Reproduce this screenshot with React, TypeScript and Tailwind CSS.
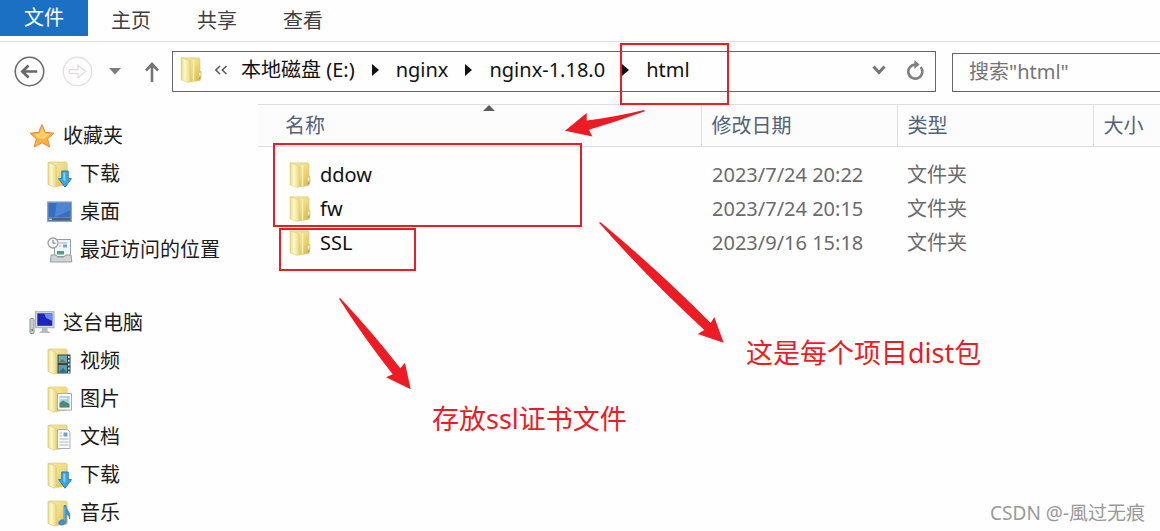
import type { ReactNode } from "react";

// gradients shared by every folder icon
const FolderGradients = () => (
  <svg className="absolute h-0 w-0" aria-hidden="true">
    <defs>
      <linearGradient id="folder-front" x1="0" y1="0" x2="1" y2="0">
        <stop offset="0" stopColor="#e6da84" />
        <stop offset=".4" stopColor="#fbf7cb" />
        <stop offset="1" stopColor="#ead97e" />
      </linearGradient>
      <linearGradient id="folder-back" x1="0" y1="0" x2="1" y2="1">
        <stop offset="0" stopColor="#f5eaa0" />
        <stop offset=".5" stopColor="#efdc83" />
        <stop offset="1" stopColor="#dcb445" />
      </linearGradient>
    </defs>
  </svg>
);

const Folder = ({ children }: { children?: ReactNode }) => (
  <svg viewBox="0 0 25 27" className="w-[25px] h-[27px] shrink-0" aria-hidden="true">
    <path d="M2 1 L19 1 L20.2 2.5 L20.2 24 L9 25.5 Z" fill="url(#folder-back)" stroke="#dcc87f" strokeWidth=".7" />
    <path d="M1 1.5 L7.6 3.6 Q9.2 4.2 9.2 6 L9.2 25 Q8.4 26.6 7 26 L1 23.5 Z" fill="url(#folder-front)" stroke="#d6c379" strokeWidth=".6" />
    {children}
  </svg>
);

const ListFolder = () => (
  <svg viewBox="0 0 22 26" className="w-[22px] h-[26px] shrink-0" aria-hidden="true">
    <path d="M1 .8 L19 .8 L20 2 L20 23.6 L9 25 Z" fill="url(#folder-back)" stroke="#dccb7c" strokeWidth=".6" />
    <path d="M13.5 3 L13.5 23.8" stroke="#f8efb4" strokeWidth="1.6" />
    <path d="M1 1 L8.4 3 Q10.3 3.6 10.3 5.5 L10.3 24 Q9.2 26 7.4 25.2 L1 22.8 Z" fill="url(#folder-front)" stroke="#d8ca74" strokeWidth=".5" />
    <path d="M18.2 14.5 Q20 12.8 21.4 14.8 L21.4 20 L20 23.4 L18.2 20 Z" fill="#ddc46a" />
    <path d="M18.9 15.6 H20.4 V18.6 H18.9 Z" fill="#fffbe6" />
    <rect x="19" y="20.4" width="1.3" height="1.6" fill="#8a9188" />
  </svg>
);

const DownloadIcon = () => (
  <Folder>
    <path d="M14.8 10 H21.2 V17.6 H24.5 L18 26.2 L11.5 17.6 H14.8 Z" fill="#3aa5e3" stroke="#2b7fb8" strokeWidth="1" />
    <path d="M16.3 11.5 H18.3 V21 L16.3 19 Z" fill="#86d1f5" />
  </Folder>
);

const VideoIcon = () => (
  <Folder>
    <rect x="10.5" y="6.5" width="13" height="19" fill="#34454c" />
    <rect x="11.5" y="7.5" width="8.5" height="7.5" fill="#66a9b8" />
    <rect x="11.5" y="17" width="8.5" height="7.5" fill="#4f9fae" />
    <path d="M12 14.5 L15 11 L19.5 14.5 Z" fill="#a5662f" />
    <path d="M12 24 L16 20 L19.5 24 Z" fill="#2c6f80" />
    <path d="M21.8 8 V25" stroke="#e8eef0" strokeWidth="1.5" strokeDasharray="2 1.8" />
  </Folder>
);

const PictureIcon = () => (
  <Folder>
    <rect x="10.5" y="7.5" width="14" height="16.5" fill="#fbfcfd" stroke="#a1afb9" />
    <rect x="12.5" y="10" width="10" height="11.5" fill="#a5d0ec" />
    <path d="M12.5 17 L16 14.5 L22.5 18 V21.5 H12.5 Z" fill="#4e8875" />
    <path d="M13 12.5 H20" stroke="#e2f1fa" strokeWidth="1.5" />
  </Folder>
);

const DocumentIcon = () => (
  <Folder>
    <path d="M10.5 5.5 H20.5 L23 8 V24.5 H10.5 Z" fill="#fbfbfb" stroke="#a9b0b4" />
    <path d="M12.5 9 H15 M12.5 12 H15 M12.5 15 H21.5 M12.5 18 H21.5 M12.5 21 H21.5" stroke="#a9b6c0" />
    <path d="M16.5 8.5 H20.5 V12.5 H16.5 Z" fill="#6ba3d0" />
  </Folder>
);

const MusicIcon = () => (
  <Folder>
    <path d="M17 5.5 H19 C19.3 11 24.2 11.5 22.6 19 C22.2 15.5 20.5 14.5 19.2 14 V21.5 C18.8 25.2 13 26.2 11.8 23.5 C11.2 20.8 14.5 19.3 17 20 Z" fill="#3c94cf" stroke="#2371a5" strokeWidth=".6" />
    <path d="M17.8 7 V21" stroke="#8bcbed" strokeWidth=".8" />
  </Folder>
);

const StarIcon = () => (
  <svg viewBox="0 0 26 26" className="w-[26px] h-[26px] shrink-0" aria-hidden="true">
    <path d="M13 1.5 L16.4 9.3 L25 10.2 L18.6 15.8 L20.6 24 L13 19.8 L5.2 24 L7.4 15.8 L1 10.2 L9.6 9.3 Z" fill="#fbb040" stroke="#ea8a3c" strokeWidth="1" strokeLinejoin="round" />
    <path d="M13 4.5 L15.4 10.5 L21.5 11.2 L16.5 15 L13 16 L8.8 15 L5 11.2 L10.8 10.5 Z" fill="#fdd06c" />
  </svg>
);

const DesktopIcon = () => (
  <svg viewBox="0 0 26 22" className="w-[25px] h-[22px] shrink-0" aria-hidden="true">
    <rect x=".5" y=".5" width="25" height="20.5" fill="#7f9bb9" stroke="#8fa5bb" />
    <rect x="1.5" y="1.5" width="23" height="15" fill="#356fc4" />
    <path d="M10 1.5 H24.5 V9 L13 14 L8 16.5 Z" fill="#4e86d4" />
    <rect x="1.5" y="17" width="23" height="3" fill="#4d637b" />
    <path d="M2 18.5 H5" stroke="#b7d0e4" strokeWidth="1.5" />
  </svg>
);

const RecentIcon = () => (
  <svg viewBox="0 0 26 26" className="w-[26px] h-[26px] shrink-0" aria-hidden="true">
    <rect x="7.5" y="2.5" width="16" height="17" fill="#f2f5f7" stroke="#939ea5" />
    <path d="M12 6 H20 M12 9 H14" stroke="#a8b4bb" />
    <rect x="16" y="7.5" width="4" height="3" fill="#6fa4d6" />
    <rect x="10" y="14" width="7" height="3.5" fill="#4ea37e" />
    <path d="M4 18 H9 L10.5 20 H17 L18.5 18 H24 L24.8 25 H3.5 Z" fill="#d0d4d7" stroke="#8d9499" strokeWidth=".9" />
    <circle cx="6" cy="6" r="5" fill="#f7f9fa" stroke="#98a1a7" strokeWidth="1.3" />
    <path d="M6 3 V6.2 H8.5" stroke="#6d7880" fill="none" />
  </svg>
);

const ComputerIcon = () => (
  <svg viewBox="0 0 26 24" className="w-[26px] h-[24px] shrink-0" aria-hidden="true">
    <rect x="6.5" y=".7" width="18.5" height="16" fill="#d7dce0" stroke="#a6afb5" />
    <rect x="8.3" y="2.3" width="15" height="12.5" fill="#1c25b8" />
    <path d="M15 2.3 H23.3 V10 L17 7 Z" fill="#6f87ea" />
    <path d="M13 17 H18.5 V19.5 L21.5 22 H10 L13 19.5 Z" fill="#b3bbc0" />
    <rect x="1" y="7.5" width="4" height="15" rx="1" fill="#c8cdd0" stroke="#8b9297" />
    <rect x="2.4" y="18" width="1.6" height="2" fill="#48a258" />
  </svg>
);

const favorites = [
  { name: "下载", icon: <DownloadIcon /> },
  { name: "桌面", icon: <DesktopIcon /> },
  { name: "最近访问的位置", icon: <RecentIcon /> },
];

const computer = [
  { name: "视频", icon: <VideoIcon /> },
  { name: "图片", icon: <PictureIcon /> },
  { name: "文档", icon: <DocumentIcon /> },
  { name: "下载", icon: <DownloadIcon /> },
  { name: "音乐", icon: <MusicIcon /> },
];

const files = [
  { name: "ddow", date: "2023/7/24 20:22" },
  { name: "fw", date: "2023/7/24 20:15" },
  { name: "SSL", date: "2023/9/16 15:18" },
];

const crumbs = ["本地磁盘 (E:)", "nginx", "nginx-1.18.0", "html"];

type Item = { name: string; icon: ReactNode };

const TreeGroup = ({ title, icon, items }: { title: string; icon: ReactNode; items: Item[] }) => (
  <ul>
    <li>
      <a href="#" className="flex h-[38px] items-center gap-2 pl-[29px]">
        {icon}
        {title}
      </a>
    </li>
    {items.map((item) => (
      <li key={item.name}>
        <a href="#" className="flex h-[38px] items-center pl-[47px]">
          <span className="flex w-[33px]">{item.icon}</span>
          {item.name}
        </a>
      </li>
    ))}
  </ul>
);

const Ribbon = () => (
  <div className="flex h-[42px] border-b border-[#dcdfe2]">
    <button className="h-9 w-[88px] bg-[#1b70c4] text-white">文件</button>
    <button className="w-[86px] text-[#3f3f3f]">主页</button>
    <button className="w-[86px] text-[#3f3f3f]">共享</button>
    <button className="w-[86px] text-[#3f3f3f]">查看</button>
  </div>
);

const AddressBar = () => (
  <div className="flex items-end pt-[9px] pl-[14px]">
    <div className="flex h-[41px] items-center">
      <button aria-label="后退">
        <svg viewBox="0 0 32 32" className="w-[31px] h-[31px]" fill="none">
          <circle cx="16" cy="16" r="14.7" stroke="#6a6a6a" strokeWidth="1.6" />
          <path d="M24 16 H9 M15 9.8 L8.6 16 L15 22.2" stroke="#686868" strokeWidth="2.8" />
        </svg>
      </button>
      <button aria-label="前进" className="ml-[17px]">
        <svg viewBox="0 0 32 32" className="w-[31px] h-[31px]" fill="none">
          <circle cx="16" cy="16" r="14.7" stroke="#e6e0e0" strokeWidth="1.4" />
          <path d="M7.5 14 H16.5 V9.5 L24.5 16 L16.5 22.5 V18 H7.5 Z" stroke="#e0dcdc" strokeWidth="1.3" />
        </svg>
      </button>
      <button aria-label="历史记录" className="ml-4">
        <svg viewBox="0 0 12 7" className="w-3 h-[7px]">
          <path d="M0 0 H12 L6 6.5 Z" fill="#7c7c7c" />
        </svg>
      </button>
      <button aria-label="上移" className="ml-6">
        <svg viewBox="0 0 14 20" className="w-[14px] h-5" fill="none">
          <path d="M7 20 V2 M1 8.5 L7 2 L13 8.5" stroke="#747474" strokeWidth="2.6" />
        </svg>
      </button>
    </div>
    <div className="ml-[13px] flex h-[41px] min-w-0 flex-1 items-center border border-[#666] pl-[7px] pb-[3px] text-[#111]">
      <ListFolder />
      <button aria-label="更多" className="ml-3">
        <svg viewBox="0 0 14 10" className="w-[14px] h-[10px]" fill="none">
          <path d="M6 1 L1.8 5 L6 9 M12.5 1 L8.3 5 L12.5 9" stroke="#555" strokeWidth="1.5" />
        </svg>
      </button>
      <nav className="ml-[13px] flex flex-1 items-center gap-[17px]">
        {crumbs.map((crumb, i) => (
          <div key={crumb} className="flex items-center gap-[17px]">
            {i > 0 && (
              <svg viewBox="0 0 7 12" className="w-[7px] h-3" aria-hidden="true">
                <path d="M0 0 L7 6 L0 12 Z" fill="#111" />
              </svg>
            )}
            <a href="#" className="whitespace-nowrap">{crumb}</a>
          </div>
        ))}
      </nav>
      <button aria-label="展开" className="mr-5">
        <svg viewBox="0 0 14 12" className="w-[14px] h-3" fill="none">
          <path d="M1.5 2.5 L7 8.5 L12.5 2.5" stroke="#777" strokeWidth="3" />
        </svg>
      </button>
      <button aria-label="刷新" className="mr-[11px]">
        <svg viewBox="0 0 18 20" className="w-[18px] h-5" fill="none">
          <path d="M14.6 7 A7 7 0 1 1 9.5 4.6" stroke="#808080" strokeWidth="2.6" />
          <path d="M8.4 0 L13.6 4.4 L8.4 9 Z" fill="#808080" />
        </svg>
      </button>
    </div>
    <input
      aria-label="搜索"
      placeholder={'搜索"html"'}
      className="ml-4 h-[39px] w-52 border border-r-0 border-[#666] pl-4 pb-[2px] outline-none placeholder:text-[#757575]"
    />
  </div>
);

const FileTable = () => (
  <table className="w-full table-fixed text-left">
    <thead>
      <tr className="h-[42px] border-y border-[#dedede] bg-[#fcfcfc] text-[#53617a]">
        <th className="relative pl-[27px] font-normal">
          名称
          <svg viewBox="0 0 12 6" className="absolute top-0 left-[225px] w-3 h-[6px]" aria-hidden="true">
            <path d="M6 0 L12 6 H0 Z" fill="#5c5c5c" />
          </svg>
        </th>
        <th className="w-[196px] border-l border-[#dedede] pl-[10px] font-normal">修改日期</th>
        <th className="w-[196px] border-l border-[#dedede] pl-[10px] font-normal">类型</th>
        <th className="w-[67px] border-l border-[#dedede] pl-[10px] font-normal">大小</th>
      </tr>
    </thead>
    <tbody className="before:block before:h-[11px]">
      {files.map((file) => (
        <tr key={file.name} className="h-[34px] text-[#6b6b6b]">
          <td className="pl-[31px] text-[#111]">
            <a href="#" className="flex items-center gap-[9px]">
              <ListFolder />
              {file.name}
            </a>
          </td>
          <td className="pl-[11px] whitespace-nowrap">{file.date}</td>
          <td className="pl-[10px]">文件夹</td>
          <td />
        </tr>
      ))}
    </tbody>
  </table>
);

// red marks drawn on top of the window
const Annotations = () => (
  <div className="pointer-events-none text-[27px] leading-9 text-[#ed1c24]">
    <div className="absolute top-[43px] left-[620px] h-[62px] w-[109px] border-2 border-[#ed1c24]" />
    <div className="absolute top-[143px] left-[273px] h-[84px] w-[309px] border-2 border-[#ed1c24]" />
    <div className="absolute top-[228px] left-[279px] h-[43px] w-[137px] border-2 border-[#ed1c24]" />
    <svg viewBox="0 0 80 27" className="absolute top-[110px] left-[565px] w-20 h-[27px]" fill="#ed1c24">
      <path d="M0 20.7 L21.7 3 L21.7 10.5 Q50 7 79 0 L80 1.2 Q53 11 24 19.7 L27.3 26.5 Z" />
    </svg>
    <svg viewBox="0 0 125 121" className="absolute top-[222px] left-[599px] w-[125px] h-[121px]" fill="#ed1c24">
      <path d="M0 .8 L1.2 0 Q57 46 111.7 101 L115.3 95 L124.7 120.7 L98.7 112 L105.3 108 Q48 55 0 .8 Z" />
    </svg>
    <svg viewBox="0 0 72 92" className="absolute top-[298px] left-[339px] w-[72px] h-[92px]" fill="#ed1c24">
      <path d="M0 .8 L1.2 0 Q34 35 61.3 70.3 L66 64.7 L71.7 91.3 L47 79.3 L53.7 76.3 Q25 40 0 .8 Z" />
    </svg>
    <p className="absolute top-[335px] left-[746px] whitespace-nowrap">这是每个项目dist包</p>
    <p className="absolute top-[401px] left-[432px] whitespace-nowrap">存放ssl证书文件</p>
  </div>
);

const App = () => {
  return (
    <div className="relative flex h-screen flex-col overflow-hidden bg-[#fefefe] font-['Noto_Sans','Noto_Sans_CJK_SC',sans-serif] text-[20px] leading-7 text-[#1c1c1c]">
      <FolderGradients />
      <Ribbon />
      <AddressBar />
      <div className="flex min-h-0 flex-1 pt-3">
        <aside className="flex w-[258px] shrink-0 flex-col gap-[35px] pt-[13px]">
          <TreeGroup title="收藏夹" icon={<StarIcon />} items={favorites} />
          <TreeGroup title="这台电脑" icon={<ComputerIcon />} items={computer} />
        </aside>
        <main className="min-w-0 flex-1">
          <FileTable />
        </main>
      </div>
      <Annotations />
      <p className="absolute right-[15px] bottom-1 text-[19px] text-[#999]">CSDN @-風过无痕</p>
    </div>
  );
};

export default App;
